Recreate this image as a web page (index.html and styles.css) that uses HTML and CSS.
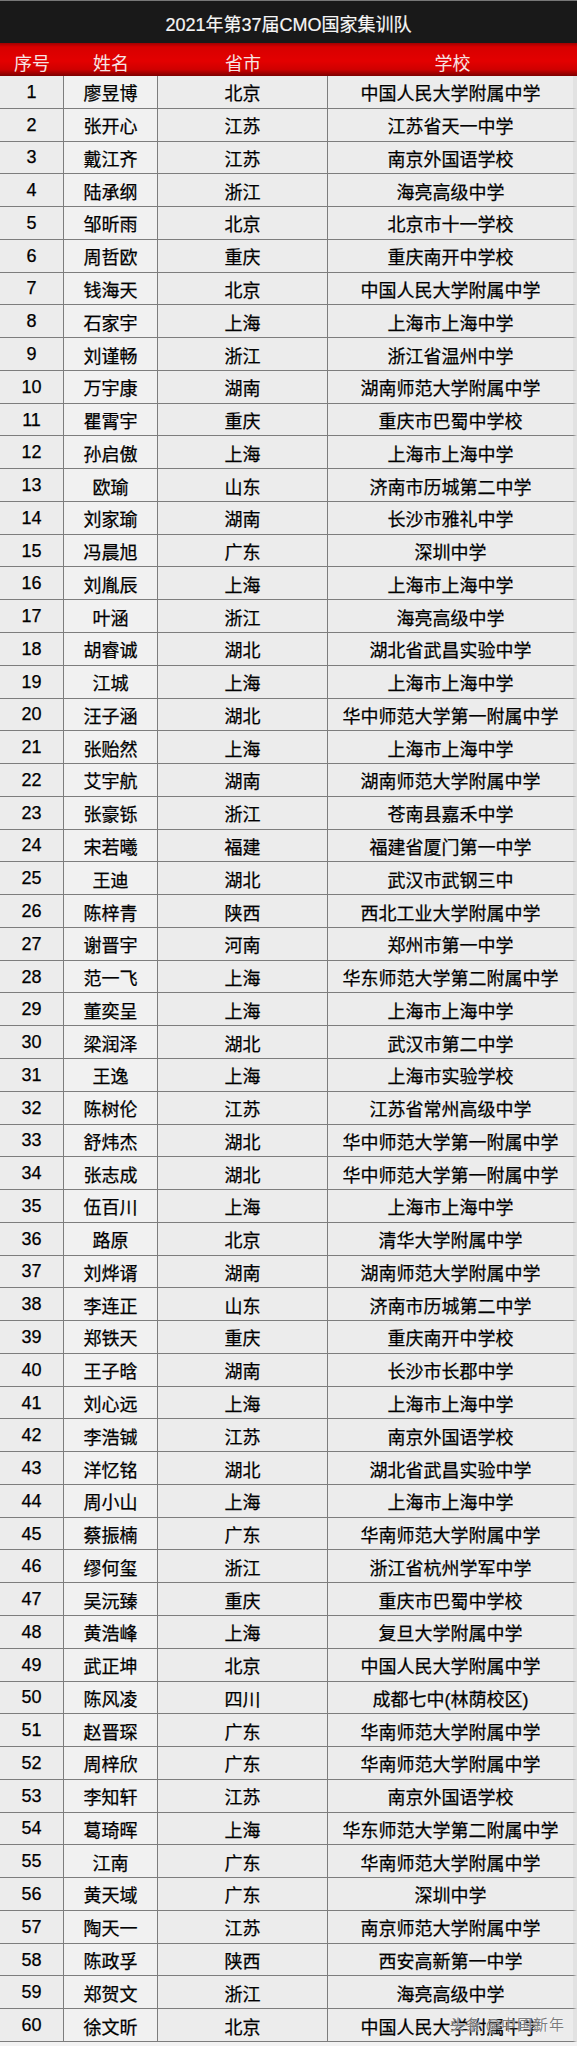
FILE: index.html
```html
<!DOCTYPE html>
<html lang="zh-CN">
<head>
<meta charset="utf-8">
<title>2021年第37届CMO国家集训队</title>
<link rel="stylesheet" href="styles.css">
</head>
<body>
<div class="sheet">
  <div class="title">2021年第37届CMO国家集训队</div>
  <div class="head">
    <div class="hc">序号</div>
    <div class="hc">姓名</div>
    <div class="hc">省市</div>
    <div class="hc">学校</div>
  </div>
  <div class="rows">
    <div class="c">1</div><div class="c">廖昱博</div><div class="c">北京</div><div class="c">中国人民大学附属中学</div>
    <div class="c">2</div><div class="c">张开心</div><div class="c">江苏</div><div class="c">江苏省天一中学</div>
    <div class="c">3</div><div class="c">戴江齐</div><div class="c">江苏</div><div class="c">南京外国语学校</div>
    <div class="c">4</div><div class="c">陆承纲</div><div class="c">浙江</div><div class="c">海亮高级中学</div>
    <div class="c">5</div><div class="c">邹昕雨</div><div class="c">北京</div><div class="c">北京市十一学校</div>
    <div class="c">6</div><div class="c">周哲欧</div><div class="c">重庆</div><div class="c">重庆南开中学校</div>
    <div class="c">7</div><div class="c">钱海天</div><div class="c">北京</div><div class="c">中国人民大学附属中学</div>
    <div class="c">8</div><div class="c">石家宇</div><div class="c">上海</div><div class="c">上海市上海中学</div>
    <div class="c">9</div><div class="c">刘谨畅</div><div class="c">浙江</div><div class="c">浙江省温州中学</div>
    <div class="c">10</div><div class="c">万宇康</div><div class="c">湖南</div><div class="c">湖南师范大学附属中学</div>
    <div class="c">11</div><div class="c">瞿霄宇</div><div class="c">重庆</div><div class="c">重庆市巴蜀中学校</div>
    <div class="c">12</div><div class="c">孙启傲</div><div class="c">上海</div><div class="c">上海市上海中学</div>
    <div class="c">13</div><div class="c">欧瑜</div><div class="c">山东</div><div class="c">济南市历城第二中学</div>
    <div class="c">14</div><div class="c">刘家瑜</div><div class="c">湖南</div><div class="c">长沙市雅礼中学</div>
    <div class="c">15</div><div class="c">冯晨旭</div><div class="c">广东</div><div class="c">深圳中学</div>
    <div class="c">16</div><div class="c">刘胤辰</div><div class="c">上海</div><div class="c">上海市上海中学</div>
    <div class="c">17</div><div class="c">叶涵</div><div class="c">浙江</div><div class="c">海亮高级中学</div>
    <div class="c">18</div><div class="c">胡睿诚</div><div class="c">湖北</div><div class="c">湖北省武昌实验中学</div>
    <div class="c">19</div><div class="c">江城</div><div class="c">上海</div><div class="c">上海市上海中学</div>
    <div class="c">20</div><div class="c">汪子涵</div><div class="c">湖北</div><div class="c">华中师范大学第一附属中学</div>
    <div class="c">21</div><div class="c">张贻然</div><div class="c">上海</div><div class="c">上海市上海中学</div>
    <div class="c">22</div><div class="c">艾宇航</div><div class="c">湖南</div><div class="c">湖南师范大学附属中学</div>
    <div class="c">23</div><div class="c">张豪铄</div><div class="c">浙江</div><div class="c">苍南县嘉禾中学</div>
    <div class="c">24</div><div class="c">宋若曦</div><div class="c">福建</div><div class="c">福建省厦门第一中学</div>
    <div class="c">25</div><div class="c">王迪</div><div class="c">湖北</div><div class="c">武汉市武钢三中</div>
    <div class="c">26</div><div class="c">陈梓青</div><div class="c">陕西</div><div class="c">西北工业大学附属中学</div>
    <div class="c">27</div><div class="c">谢晋宇</div><div class="c">河南</div><div class="c">郑州市第一中学</div>
    <div class="c">28</div><div class="c">范一飞</div><div class="c">上海</div><div class="c">华东师范大学第二附属中学</div>
    <div class="c">29</div><div class="c">董奕呈</div><div class="c">上海</div><div class="c">上海市上海中学</div>
    <div class="c">30</div><div class="c">梁润泽</div><div class="c">湖北</div><div class="c">武汉市第二中学</div>
    <div class="c">31</div><div class="c">王逸</div><div class="c">上海</div><div class="c">上海市实验学校</div>
    <div class="c">32</div><div class="c">陈树伦</div><div class="c">江苏</div><div class="c">江苏省常州高级中学</div>
    <div class="c">33</div><div class="c">舒炜杰</div><div class="c">湖北</div><div class="c">华中师范大学第一附属中学</div>
    <div class="c">34</div><div class="c">张志成</div><div class="c">湖北</div><div class="c">华中师范大学第一附属中学</div>
    <div class="c">35</div><div class="c">伍百川</div><div class="c">上海</div><div class="c">上海市上海中学</div>
    <div class="c">36</div><div class="c">路原</div><div class="c">北京</div><div class="c">清华大学附属中学</div>
    <div class="c">37</div><div class="c">刘烨谞</div><div class="c">湖南</div><div class="c">湖南师范大学附属中学</div>
    <div class="c">38</div><div class="c">李连正</div><div class="c">山东</div><div class="c">济南市历城第二中学</div>
    <div class="c">39</div><div class="c">郑铁天</div><div class="c">重庆</div><div class="c">重庆南开中学校</div>
    <div class="c">40</div><div class="c">王子晗</div><div class="c">湖南</div><div class="c">长沙市长郡中学</div>
    <div class="c">41</div><div class="c">刘心远</div><div class="c">上海</div><div class="c">上海市上海中学</div>
    <div class="c">42</div><div class="c">李浩铖</div><div class="c">江苏</div><div class="c">南京外国语学校</div>
    <div class="c">43</div><div class="c">洋忆铭</div><div class="c">湖北</div><div class="c">湖北省武昌实验中学</div>
    <div class="c">44</div><div class="c">周小山</div><div class="c">上海</div><div class="c">上海市上海中学</div>
    <div class="c">45</div><div class="c">蔡振楠</div><div class="c">广东</div><div class="c">华南师范大学附属中学</div>
    <div class="c">46</div><div class="c">缪何玺</div><div class="c">浙江</div><div class="c">浙江省杭州学军中学</div>
    <div class="c">47</div><div class="c">吴沅臻</div><div class="c">重庆</div><div class="c">重庆市巴蜀中学校</div>
    <div class="c">48</div><div class="c">黄浩峰</div><div class="c">上海</div><div class="c">复旦大学附属中学</div>
    <div class="c">49</div><div class="c">武正坤</div><div class="c">北京</div><div class="c">中国人民大学附属中学</div>
    <div class="c">50</div><div class="c">陈风凌</div><div class="c">四川</div><div class="c">成都七中(林荫校区)</div>
    <div class="c">51</div><div class="c">赵晋琛</div><div class="c">广东</div><div class="c">华南师范大学附属中学</div>
    <div class="c">52</div><div class="c">周梓欣</div><div class="c">广东</div><div class="c">华南师范大学附属中学</div>
    <div class="c">53</div><div class="c">李知轩</div><div class="c">江苏</div><div class="c">南京外国语学校</div>
    <div class="c">54</div><div class="c">葛琦晖</div><div class="c">上海</div><div class="c">华东师范大学第二附属中学</div>
    <div class="c">55</div><div class="c">江南</div><div class="c">广东</div><div class="c">华南师范大学附属中学</div>
    <div class="c">56</div><div class="c">黄天域</div><div class="c">广东</div><div class="c">深圳中学</div>
    <div class="c">57</div><div class="c">陶天一</div><div class="c">江苏</div><div class="c">南京师范大学附属中学</div>
    <div class="c">58</div><div class="c">陈政孚</div><div class="c">陕西</div><div class="c">西安高新第一中学</div>
    <div class="c">59</div><div class="c">郑贺文</div><div class="c">浙江</div><div class="c">海亮高级中学</div>
    <div class="c">60</div><div class="c">徐文昕</div><div class="c">北京</div><div class="c">中国人民大学附属中学</div>
  </div>
  <div class="watermark">头条 @中国新年</div>
</div>
</body>
</html>
```

FILE: styles.css
```css
html, body {
  margin: 0;
  padding: 0;
  background: #f3f3f3;
}

.sheet {
  position: relative;
  width: 577px;
  font-family: "Liberation Sans", "Noto Sans CJK SC", sans-serif;
  color: #000;
}

.title {
  height: 43px;
  box-sizing: border-box;
  background: #191919;
  border-top: 1px solid #777;
  color: #f6f6f6;
  font-size: 18px;
  display: flex;
  align-items: center;
  justify-content: center;
  padding-top: 2px;
  -webkit-text-stroke: 0.2px #f6f6f6;
}

.head {
  height: 33px;
  display: grid;
  grid-template-columns: 64px 94px 170px 1fr;
  background: linear-gradient(#a00000 0px, #d80000 4px, #e30000 55%, #cf0000 80%, #7c0000 100%);
}

.hc {
  display: flex;
  align-items: center;
  justify-content: center;
  padding-top: 4px;
  font-size: 18px;
  color: #f6e4e4;
}

.rows {
  display: grid;
  grid-template-columns: 64px 94px 170px 1fr;
  grid-auto-rows: 32.766px;
  background: #ececec;
}

.c {
  box-sizing: border-box;
  display: flex;
  align-items: center;
  justify-content: center;
  font-size: 18px;
  border-right: 1px solid #7d7d7d;
  border-bottom: 1px solid #7d7d7d;
  white-space: nowrap;
  padding-top: 1px;
  -webkit-text-stroke: 0.25px #000;
}

.c:nth-child(4n+2) {
  background: #f1f1f1;
}

.c:nth-child(4n) {
  border-right: 4px solid #e2e2e2;
}

.watermark {
  position: absolute;
  right: 12px;
  bottom: 8px;
  font-size: 15px;
  font-family: "Noto Sans CJK SC", sans-serif;
  color: rgba(80, 80, 80, 0.75);
  text-shadow: 0 0 2px #fff, 0 0 1px #fff;
  letter-spacing: 1px;
}
```
